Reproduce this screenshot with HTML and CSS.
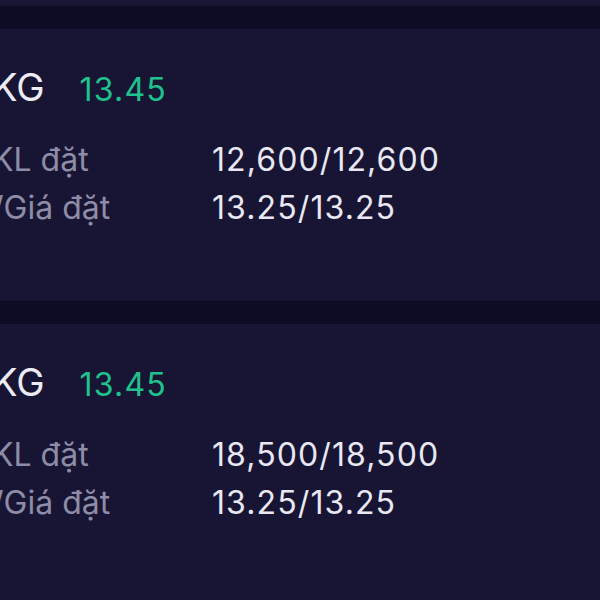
FILE: index.html
```html
<!DOCTYPE html>
<html lang="vi">
<head>
  <meta charset="UTF-8" />
  <meta name="viewport" content="width=device-width, initial-scale=1.0"/>
  <title>Lệnh đặt</title>
  <link rel="stylesheet" href="styles.css">
</head>
<body>

  <div class="list">
    <div class="edge"></div>
    <div class="divider"></div>

    <div class="order">
      <div class="order-head">
        <span class="symbol">KG</span>
        <span class="price up">13.45</span>
      </div>
      <div class="order-row">
        <span class="label">KL đặt</span>
        <span class="value">12,600/12,600</span>
      </div>
      <div class="order-row">
        <span class="label">/Giá đặt</span>
        <span class="value">13.25/13.25</span>
      </div>
    </div>

    <div class="divider"></div>

    <div class="order">
      <div class="order-head">
        <span class="symbol">KG</span>
        <span class="price up">13.45</span>
      </div>
      <div class="order-row">
        <span class="label">KL đặt</span>
        <span class="value">18,500/18,500</span>
      </div>
      <div class="order-row">
        <span class="label">/Giá đặt</span>
        <span class="value">13.25/13.25</span>
      </div>
    </div>
  </div>

</body>
</html>
```

FILE: styles.css
```css
* {
  box-sizing: border-box;
}
body {
  margin: 0;
  padding: 0;
  background: #171533;
  font-family: 'Inter', 'Noto Sans', sans-serif;
  color: #e9e8f2;
  overflow: hidden;
}

.list {
  display: flex;
  flex-direction: column;
  margin-left: -8px;
}

.edge {
  height: 6px;
  background: #181634;
}

.divider {
  height: 23px;
  background: #0e0c25;
}

.order {
  height: 272px;
  background: #171533;
  padding-top: 36px;
}

.order-head {
  display: flex;
  align-items: baseline;
  gap: 35px;
  line-height: 44px;
  margin-bottom: 24px;
}

.symbol {
  font-size: 38px;
  color: #ecebf4;
}

.price {
  font-size: 32px;
  letter-spacing: 1.2px;
}

.up {
  color: #1fc28c;
}

.order-row {
  display: flex;
  font-size: 32px;
  line-height: 48px;
}

.label {
  width: 220px;
  color: #8e8ca6;
}

.value {
  color: #e9e8f2;
  letter-spacing: 1.1px;
}
```
